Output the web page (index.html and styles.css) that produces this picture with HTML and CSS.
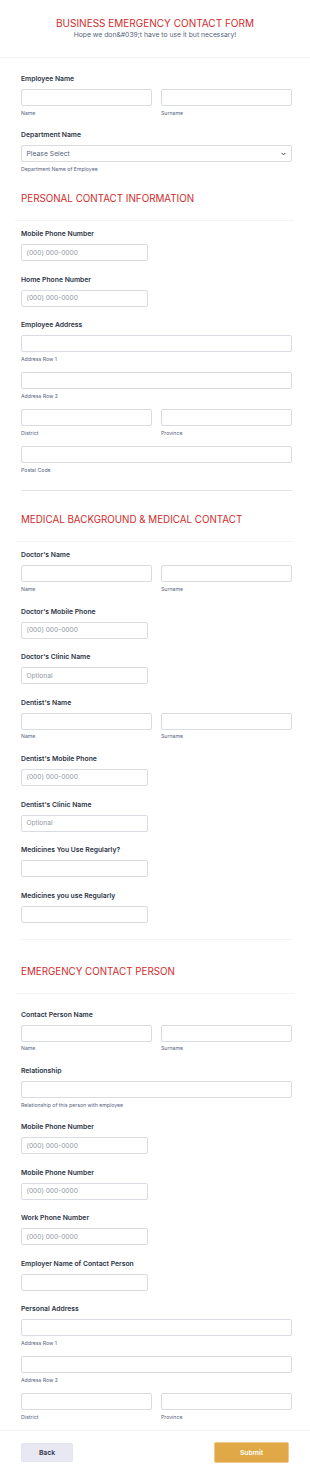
FILE: index.html
```html
<!DOCTYPE html>
<html lang="en">
<head>
<meta charset="utf-8">
<title>Business Emergency Contact Form</title>
<link rel="stylesheet" href="styles.css">
</head>
<body>
<header class="form-header">
  <h1 class="form-title">BUSINESS EMERGENCY CONTACT FORM</h1>
  <p class="form-subtitle">Hope we don&amp;#039;t have to use it but necessary!</p>
</header>

<main class="form-body">
  <div class="field">
    <label class="label">Employee Name</label>
    <div class="row-2">
      <div class="cell"><div class="input"></div><span class="sublabel">Name</span></div>
      <div class="cell"><div class="input"></div><span class="sublabel">Surname</span></div>
    </div>
  </div>

  <div class="field">
    <label class="label">Department Name</label>
    <div class="input select"><span class="ph-select">Please Select</span>
      <svg class="chev" width="5" height="4" viewBox="0 0 5 4"><path d="M0.6 0.9 L2.5 2.8 L4.4 0.9" fill="none" stroke="#2c3345" stroke-width="0.9"/></svg>
    </div>
    <span class="sublabel">Department Name of Employee</span>
  </div>

  <div class="section-head first"><h2>PERSONAL CONTACT INFORMATION</h2></div>

  <div class="field">
    <label class="label">Mobile Phone Number</label>
    <div class="input narrow"><span class="ph">(000) 000-0000</span></div>
  </div>
  <div class="field">
    <label class="label">Home Phone Number</label>
    <div class="input narrow"><span class="ph">(000) 000-0000</span></div>
  </div>
  <div class="field">
    <label class="label">Employee Address</label>
    <div class="addr-line"><div class="input"></div><span class="sublabel">Address Row 1</span></div>
    <div class="addr-line"><div class="input"></div><span class="sublabel">Address Row 2</span></div>
    <div class="addr-line row-2">
      <div class="cell"><div class="input"></div><span class="sublabel">District</span></div>
      <div class="cell"><div class="input"></div><span class="sublabel">Province</span></div>
    </div>
    <div class="addr-line"><div class="input"></div><span class="sublabel">Postal Code</span></div>
  </div>

  <hr class="divider-dark">

  <div class="section-head after-dark"><h2>MEDICAL BACKGROUND &amp; MEDICAL CONTACT</h2></div>

  <div class="field">
    <label class="label">Doctor's Name</label>
    <div class="row-2">
      <div class="cell"><div class="input"></div><span class="sublabel">Name</span></div>
      <div class="cell"><div class="input"></div><span class="sublabel">Surname</span></div>
    </div>
  </div>
  <div class="field">
    <label class="label">Doctor's Mobile Phone</label>
    <div class="input narrow"><span class="ph">(000) 000-0000</span></div>
  </div>
  <div class="field">
    <label class="label">Doctor's Clinic Name</label>
    <div class="input narrow"><span class="ph">Optional</span></div>
  </div>
  <div class="field">
    <label class="label">Dentist's Name</label>
    <div class="row-2">
      <div class="cell"><div class="input"></div><span class="sublabel">Name</span></div>
      <div class="cell"><div class="input"></div><span class="sublabel">Surname</span></div>
    </div>
  </div>
  <div class="field">
    <label class="label">Dentist's Mobile Phone</label>
    <div class="input narrow"><span class="ph">(000) 000-0000</span></div>
  </div>
  <div class="field">
    <label class="label">Dentist's Clinic Name</label>
    <div class="input narrow"><span class="ph">Optional</span></div>
  </div>
  <div class="field">
    <label class="label">Medicines You Use Regularly?</label>
    <div class="input narrow"></div>
  </div>
  <div class="field">
    <label class="label">Medicines you use Regularly</label>
    <div class="input narrow"></div>
  </div>

  <hr class="divider-light">

  <div class="section-head after-light"><h2>EMERGENCY CONTACT PERSON</h2></div>

  <div class="field">
    <label class="label">Contact Person Name</label>
    <div class="row-2">
      <div class="cell"><div class="input"></div><span class="sublabel">Name</span></div>
      <div class="cell"><div class="input"></div><span class="sublabel">Surname</span></div>
    </div>
  </div>
  <div class="field">
    <label class="label">Relationship</label>
    <div class="input"></div>
    <span class="sublabel">Relationship of this person with employee</span>
  </div>
  <div class="field">
    <label class="label">Mobile Phone Number</label>
    <div class="input narrow"><span class="ph">(000) 000-0000</span></div>
  </div>
  <div class="field">
    <label class="label">Mobile Phone Number</label>
    <div class="input narrow"><span class="ph">(000) 000-0000</span></div>
  </div>
  <div class="field">
    <label class="label">Work Phone Number</label>
    <div class="input narrow"><span class="ph">(000) 000-0000</span></div>
  </div>
  <div class="field">
    <label class="label">Employer Name of Contact Person</label>
    <div class="input narrow"></div>
  </div>
  <div class="field last">
    <label class="label">Personal Address</label>
    <div class="addr-line"><div class="input"></div><span class="sublabel">Address Row 1</span></div>
    <div class="addr-line"><div class="input"></div><span class="sublabel">Address Row 2</span></div>
    <div class="addr-line row-2">
      <div class="cell"><div class="input"></div><span class="sublabel">District</span></div>
      <div class="cell"><div class="input"></div><span class="sublabel">Province</span></div>
    </div>
  </div>

  <footer class="form-footer">
    <button class="btn btn-back">Back</button>
    <button class="btn btn-submit">Submit</button>
  </footer>
</main>
</body>
</html>
```

FILE: styles.css
```css
* { box-sizing: border-box; }
html, body { margin: 0; padding: 0; background: #fff; }
body {
  font-family: Inter, "Noto Sans", "Liberation Sans", sans-serif;
  color: #2c3345;
  width: 310px;
  overflow: hidden;
}

.form-header {
  padding: 16px 0 17px;
  border-bottom: 1px solid #f3f3f8;
  text-align: center;
}
.form-title {
  margin: 0;
  font-size: 10px;
  line-height: 14px;
  font-weight: 400;
  color: #d02b2b;
}
.form-subtitle {
  margin: 0;
  font-size: 6.8px;
  line-height: 10px;
  color: #57647e;
}

.form-body {
  padding: 16px 18px 0 21px;
  display: flex;
  flex-direction: column;
}

.field { margin-bottom: 13.6px; }
.field.last { margin-bottom: 9px; }

.label {
  display: block;
  font-size: 6.8px;
  line-height: 10px;
  font-weight: 600;
  color: #2c3345;
  margin-bottom: 5px;
}

.input {
  height: 17px;
  border: 1px solid #d8dbe6;
  border-radius: 2px;
  background: #fff;
  display: flex;
  align-items: center;
  padding: 0 4.5px;
}
.input.narrow { width: 127px; }
.ph {
  font-size: 6.6px;
  color: #8f96a3;
}
.select { justify-content: space-between; }
.ph-select {
  font-size: 6.8px;
  color: #57647e;
}
.chev { margin-right: 1px; }

.sublabel {
  display: block;
  margin-top: 2.6px;
  font-size: 5.2px;
  line-height: 8px;
  color: #57647e;
}

.row-2 {
  display: grid;
  grid-template-columns: 1fr 1fr;
  column-gap: 9px;
}

.addr-line { margin-bottom: 9.4px; }
.addr-line:last-child { margin-bottom: 0; }

.section-head {
  margin: 0 -2px 8.5px -6px;
  padding: 0 0 14px 6px;
  border-bottom: 1px solid #f3f3f8;
}
.section-head h2 {
  margin: 0;
  font-size: 9.8px;
  line-height: 15px;
  font-weight: 400;
  color: #d02b2b;
}
.section-head.first { margin-top: 4.4px; }
.section-head.after-dark { margin-top: 20.5px; }
.section-head.after-light { margin-top: 24.5px; margin-bottom: 15.5px; }

.divider-dark {
  margin: 2.8px 0 0;
  border: 0;
  border-top: 1px solid #e3e5ec;
  height: 0;
  width: 100%;
}
.divider-light {
  margin: 2.4px 0 0;
  border: 0;
  border-top: 1px solid #f3f3f8;
  height: 0;
  width: 100%;
}

.form-footer {
  margin: 0 -18px 0 -21px;
  padding: 11px 21px 0;
  border-top: 1px solid #f3f3f8;
  display: flex;
  justify-content: space-between;
  align-items: center;
}
.btn {
  font-family: Inter, "Noto Sans", "Liberation Sans", sans-serif;
  font-size: 6.8px;
  font-weight: 600;
  border-radius: 2px;
  cursor: pointer;
}
.btn-back {
  width: 52px;
  height: 19px;
  background: #e8e8f3;
  border: 1px solid #e3e3f0;
  color: #2c3345;
}
.btn-submit {
  width: 75px;
  height: 21px;
  background: #e0a846;
  border: 1px solid #edc98a;
  color: #fff;
}
```
